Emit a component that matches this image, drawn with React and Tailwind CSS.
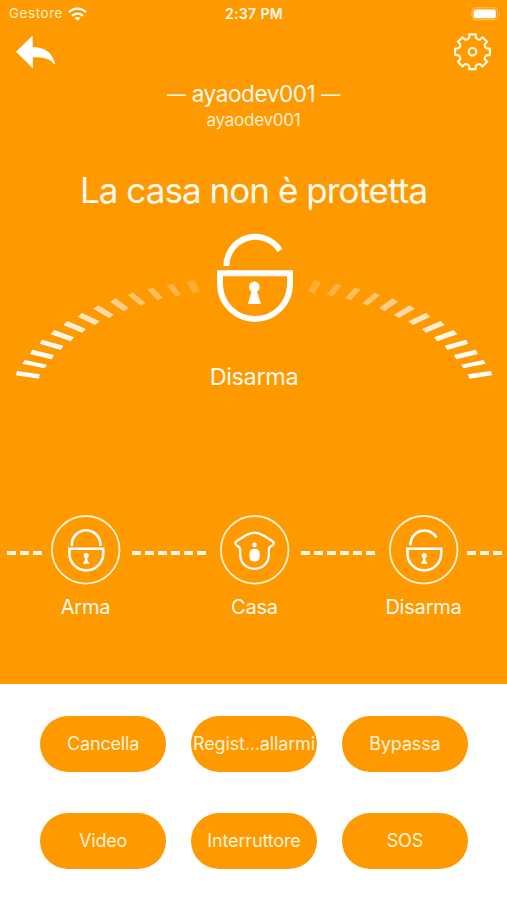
const ARC_BARS = [
  { points: '17,371 40,374.3 38.7,378.7 16,375.3', opacity: 1 },
  { points: '24.7,360 46.7,364.7 44.7,368.3 22.3,363.7', opacity: 1 },
  { points: '32.3,349.7 54,355 51.7,359.3 30,354', opacity: 0.98 },
  { points: '42,339.7 63.3,345.7 60.7,350 39.7,343.7', opacity: 0.95 },
  { points: '54.3,330 74,337.3 70.7,341.3 50.7,334.3', opacity: 0.9 },
  { points: '67.3,321 86,329 82,332.7 63.3,325', opacity: 0.84 },
  { points: '82,313 99.7,321.3 95,325 77.7,316.7', opacity: 0.74 },
  { points: '98.3,305.3 114,314.7 109,318 93.3,308.7', opacity: 0.64 },
  { points: '115.7,298.3 128.7,308 123.7,311.3 110,301.7', opacity: 0.54 },
  { points: '133.3,292.7 145.7,303.3 140.7,305.7 128,295', opacity: 0.44 },
  { points: '153.3,287.7 163,298 157.3,300.3 147.3,289.3', opacity: 0.36 },
  { points: '172.7,283.7 181.3,294.7 175.3,296.7 166.7,285.3', opacity: 0.28 },
  { points: '194.3,280 200,291.3 193.3,293.7 187,282', opacity: 0.2 },
];

const ACTIONS = ['Cancella', 'Regist...allarmi', 'Bypassa', 'Video', 'Interruttore', 'SOS'];

// Outline of an eight-tooth gear centred on 0,0
function gearPath() {
  const profile = [[-5, -12.6], [-3.3, -14], [-3.3, -17.4], [3.3, -17.4], [3.3, -14], [5, -12.6]];
  const points = [];
  for (let i = 0; i < 8; i++) {
    const a = (i * Math.PI) / 4;
    profile.forEach(([x, y]) => {
      const px = x * Math.cos(a) - y * Math.sin(a);
      const py = x * Math.sin(a) + y * Math.cos(a);
      points.push(`${px.toFixed(2)} ${py.toFixed(2)}`);
    });
  }
  return `M${points.join('L')}Z`;
}

function StatusBar() {
  return (
    <div className="flex h-[27px] items-center justify-between pl-[9px] pr-[6px]">
      <div className="flex flex-1 items-center gap-[5px]">
        <span className="text-[13.5px] tracking-[0.55px] text-[#fff0cf]">Gestore</span>
        <svg className="h-[14px] w-[19px]" viewBox="0 0 19 14" fill="none" stroke="white" strokeWidth="2.3">
          <path d="M1 5.2C5.8 .5 13.2 .5 18 5.2" />
          <path d="M4 8.9C7.2 5.9 11.8 5.9 15 8.9" />
          <path d="M9.5 13.8L6.6 11C8.2 9.6 10.8 9.6 12.4 11Z" fill="white" stroke="none" />
        </svg>
      </div>
      <span className="mr-[2px] text-[14px] font-semibold tracking-[0.35px]">2:37 PM</span>
      <div className="flex flex-1 justify-end">
        <svg className="h-[14px] w-[30px]" viewBox="0 0 30 14">
          <rect x="1" y=".8" width="25.5" height="12" rx="3.5" fill="none" stroke="white" strokeOpacity=".38" />
          <rect x="2.6" y="2.4" width="22.2" height="8.8" rx="2" fill="white" />
          <path d="M27.8 5v4c1.6-.6 1.6-3.4 0-4Z" fill="white" fillOpacity=".4" />
        </svg>
      </div>
    </div>
  );
}

function NavBar() {
  return (
    <div className="flex h-[50px] items-start justify-between pl-[16px] pr-[15px] pt-[5px]">
      <button aria-label="Indietro" className="pt-[3px]">
        <svg className="h-[34px] w-[40px]" viewBox="0 0 40 34" fill="white">
          <path d="M0 16.7L16.7 .6V12C27 12.3 36 16 39 28.4C38.7 29.6 38 29.4 37.6 28.6C33.5 23.5 27 22 16.9 22.3V33.3Z" />
        </svg>
      </button>
      <button aria-label="Impostazioni">
        <svg className="h-[39px] w-[39px]" viewBox="-19.5 -19.8 39 39" fill="none" stroke="#fff6df" strokeWidth="2.2" strokeLinejoin="round">
          <path d={gearPath()} />
          <circle r="3.8" />
        </svg>
      </button>
    </div>
  );
}

function ArcBars({ mirrored }) {
  return (
    <svg className={mirrored ? 'mt-[47px] h-[102px] w-[186px] -scale-x-100' : 'mt-[47px] h-[102px] w-[186px]'} viewBox="15 279 186 102" fill="white">
      {ARC_BARS.map((bar) => (
        <polygon key={bar.points} points={bar.points} fillOpacity={bar.opacity} />
      ))}
    </svg>
  );
}

function AlarmState() {
  return (
    <div className="flex h-[170px] items-start justify-between pl-[15px] pr-[14px]">
      <ArcBars />
      <div className="flex w-[92px] flex-col items-center">
        <svg className="h-[92px] w-[80px]" viewBox="214 232 80 92" fill="none" stroke="white" strokeWidth="6">
          <path d="M226.4 266A29 29 0 0 1 280 250.5" />
          <path d="M220 273.3H290V284A35 35 0 0 1 220 284Z" />
          <circle cx="254.3" cy="287" r="5.4" fill="white" stroke="none" />
          <path d="M252 290L247.8 304H261L256.7 290Z" fill="white" stroke="none" />
        </svg>
        <span className="mt-[38px] text-[23.5px] leading-[30px] tracking-[-0.4px]">Disarma</span>
      </div>
      <ArcBars mirrored />
    </div>
  );
}

function Dashes({ count }) {
  return (
    <div className="mt-[36px] flex gap-[4px]">
      {Array.from({ length: count }, (_, i) => (
        <span key={i} className="h-[4px] w-[9px] bg-[#fff8e8]" />
      ))}
    </div>
  );
}

function Mode({ label, children }) {
  return (
    <button className="flex w-[70px] flex-col items-center">
      <svg className="h-[70px] w-[70px] shrink-0" viewBox="0 0 70 70" fill="none" stroke="white" strokeWidth="2.6">
        <circle cx="34.7" cy="34.8" r="33.8" stroke="#fff1d0" strokeWidth="1.8" />
        {children}
      </svg>
      <span className="-ml-px mt-[8px] whitespace-nowrap text-[20px] leading-[28px] tracking-[-0.2px]">{label}</span>
    </button>
  );
}

function LockBody() {
  return (
    <>
      <path d="M18.4 33.7H52.2V38.5A16.9 16.9 0 0 1 18.4 38.5Z" />
      <circle cx="35.2" cy="40.4" r="2.5" fill="white" stroke="none" />
      <path d="M34.2 41L33.8 45.3L32 48.7H38.4L36.6 45.3L36.2 41Z" fill="white" stroke="none" />
    </>
  );
}

function ModeSelector() {
  return (
    <div className="flex items-start pl-[7px]">
      <Dashes count={3} />
      <div className="ml-[9px]">
        <Mode label="Arma">
          <path d="M20.8 31V29.6A14.2 14.2 0 0 1 49.4 29.6V31" />
          <LockBody />
        </Mode>
      </div>
      <div className="ml-[11px]"><Dashes count={6} /></div>
      <div className="ml-[14px]">
        <Mode label="Casa">
          <path
            strokeLinejoin="round"
            strokeWidth="2.3"
            d="M34.5 17.6C30.5 17.6 28.5 18.8 25.5 20.6L16.8 26C14.5 27.5 15 29.8 17.2 30.7C19.3 31.6 20.2 32.8 20.2 35V39.5C20.2 47.8 26.2 53.8 34.5 53.8S48.8 47.8 48.8 39.5V35C48.8 32.8 49.7 31.6 51.8 30.7C54 29.8 54.5 27.5 52.2 26L43.5 20.6C40.5 18.8 38.5 17.6 34.5 17.6Z"
          />
          <circle cx="34.5" cy="29.8" r="2.4" fill="white" stroke="none" />
          <rect x="29.4" y="33.8" width="10.4" height="12.8" rx="5" fill="white" stroke="none" />
        </Mode>
      </div>
      <div className="ml-[11px]"><Dashes count={6} /></div>
      <div className="ml-[14px]">
        <Mode label="Disarma">
          <path d="M21.5 30.5A14 14 0 0 1 47.6 22.5" />
          <LockBody />
        </Mode>
      </div>
      <div className="ml-[8px]"><Dashes count={3} /></div>
    </div>
  );
}

export default function App() {
  return (
    <div className="flex h-[900px] w-[507px] flex-col overflow-hidden bg-white font-['Inter','Liberation_Sans',sans-serif] text-[#fffaf0]">
      <main className="h-[684px] bg-[#ff9900]">
        <StatusBar />
        <NavBar />
        <header className="flex flex-col items-center">
          <h1 className="mt-[2px] flex h-[30px] gap-[6px] whitespace-nowrap text-[22.5px] leading-[30px] tracking-[-0.4px]">
            <span className="pt-px text-[19px]">—</span>
            <span>ayaodev001</span>
            <span className="pt-px text-[19px]">—</span>
          </h1>
          <h2 className="text-[17px] leading-[22px] tracking-[-0.25px] text-[#fff0cf]">ayaodev001</h2>
          <p className="mt-[35px] whitespace-nowrap text-[35px] leading-[48px] tracking-[-0.95px]">La casa non è protetta</p>
        </header>
        <div className="mt-[18px]">
          <AlarmState />
        </div>
        <div className="mt-[113px]">
          <ModeSelector />
        </div>
      </main>
      <section className="grid grid-cols-[126.6px_126.6px_126.6px] gap-x-[24.3px] gap-y-[41px] pl-[39.8px] pt-[31.5px]">
        {ACTIONS.map((label) => (
          <button key={label} className="flex h-[56px] items-center justify-center whitespace-nowrap rounded-full bg-[#ff9900] text-[18px] tracking-[-0.15px] text-[#fff3d9]">
            {label}
          </button>
        ))}
      </section>
    </div>
  );
}
